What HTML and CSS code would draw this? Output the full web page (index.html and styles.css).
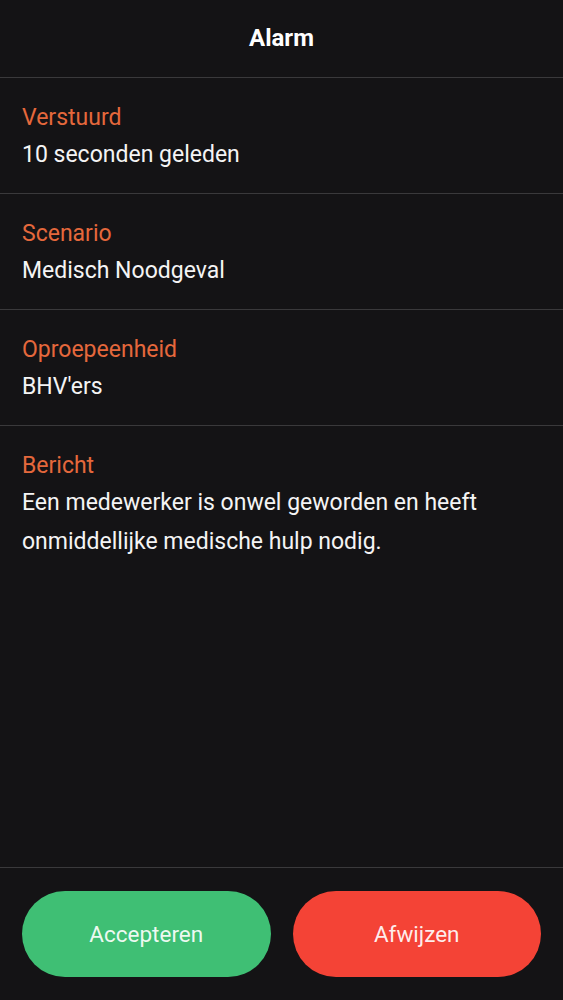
FILE: index.html
```html
<!DOCTYPE html>
<html lang="nl">
<head>
<meta charset="utf-8">
<title>Alarm</title>
<link rel="stylesheet" href="styles.css">
</head>
<body>
<div class="screen">
  <header class="header">Alarm</header>
  <section class="item">
    <div class="label">Verstuurd</div>
    <div class="value">10 seconden geleden</div>
  </section>
  <section class="item">
    <div class="label">Scenario</div>
    <div class="value">Medisch Noodgeval</div>
  </section>
  <section class="item">
    <div class="label">Oproepeenheid</div>
    <div class="value">BHV'ers</div>
  </section>
  <section class="item item-last">
    <div class="label">Bericht</div>
    <div class="value">Een medewerker is onwel geworden en heeft onmiddellijke medische hulp nodig.</div>
  </section>
  <div class="spacer"></div>
  <footer class="footer">
    <button class="btn btn-accept">Accepteren</button>
    <button class="btn btn-reject">Afwijzen</button>
  </footer>
</div>
</body>
</html>
```
FILE: styles.css
```css
html, body {
  margin: 0;
  padding: 0;
  background: #141315;
}
.screen {
  width: 563px;
  height: 1000px;
  display: flex;
  flex-direction: column;
  font-family: Roboto, "Noto Sans", sans-serif;
  color: #f2f2f2;
  background: #141315;
}
.header {
  height: 78px;
  box-sizing: border-box;
  display: flex;
  align-items: center;
  justify-content: center;
  padding-bottom: 2px;
  font-size: 24px;
  font-weight: 700;
  color: #ffffff;
  border-bottom: 1px solid #3a393b;
}
.item {
  box-sizing: border-box;
  height: 116px;
  padding: 23px 22px 0;
  border-bottom: 1px solid #3a393b;
}
.item-last {
  height: auto;
  border-bottom: none;
}
.label {
  font-size: 23px;
  line-height: 34px;
  color: #e5683c;
}
.value {
  font-size: 23px;
  line-height: 39px;
  color: #f4f4f4;
}
.spacer {
  flex: 1;
}
.footer {
  border-top: 1px solid #3a393b;
  padding: 23px 22px;
  display: flex;
  gap: 22px;
}
.btn {
  flex: 1;
  height: 86px;
  border: none;
  border-radius: 43px;
  font-family: Roboto, "Noto Sans", sans-serif;
  font-size: 22.5px;
  color: rgba(255, 255, 255, 0.92);
}
.btn-accept {
  background: #3fbf74;
}
.btn-reject {
  background: #f44336;
}
```
